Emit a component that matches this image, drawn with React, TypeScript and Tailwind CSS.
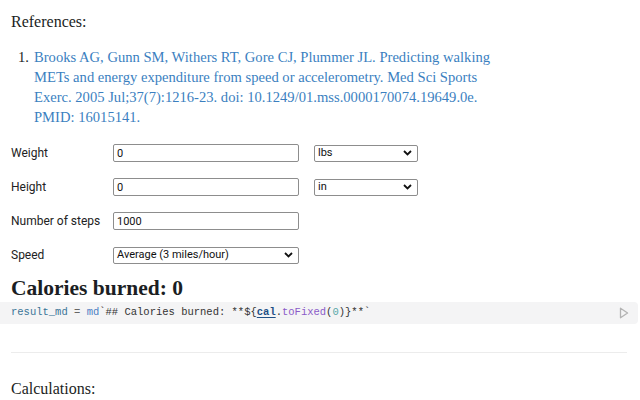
import React from "react";

const serif = "font-['Source_Serif_Pro','Liberation_Serif',serif]";
const sans = "font-['Roboto','Liberation_Sans',sans-serif]";

function Chevron() {
  return (
    <svg width="9" height="6" viewBox="0 0 9 6" className="shrink-0">
      <path d="M1 1l3.5 3.5L8 1" fill="none" stroke="#111" strokeWidth="1.8" />
    </svg>
  );
}

function Select({ value, width }: { value: string; width: string }) {
  return (
    <div
      className={`flex h-[17px] items-center justify-between rounded-[2px] border border-[#8d8d8d] bg-white pl-[3px] pr-[5px] text-[11px] text-[#111] ${width} ${sans}`}
    >
      <span>{value}</span>
      <Chevron />
    </div>
  );
}

function Field({ value }: { value: string }) {
  return (
    <input
      readOnly
      value={value}
      className={`h-[18px] w-[186px] rounded-[2px] border border-[#8d8d8d] bg-white px-[3px] text-[11px] text-[#111] outline-none ${sans}`}
    />
  );
}

function Row({ label, children }: { label: string; children: React.ReactNode }) {
  return (
    <div className="flex h-[18px] items-center">
      <div className={`w-[102px] text-[12px] text-[#222] ${sans}`}>{label}</div>
      <div className="flex items-center gap-[15px]">{children}</div>
    </div>
  );
}

export default function App() {
  return (
    <div className="h-[400px] w-[640px] overflow-hidden bg-white text-[#1b1e23]">
      {/* references */}
      <p className={`pl-[11px] pt-[12px] text-[16px] leading-[20px] ${serif}`}>References:</p>
      <ol className={`mt-[15px] pl-[18px] text-[14.6px] leading-[20px] ${serif}`}>
        <li className="flex">
          <span className="w-[16px] text-[#1b1e23]">1.</span>
          <span className="text-[#3b7fbf]">
            Brooks AG, Gunn SM, Withers RT, Gore CJ, Plummer JL. Predicting walking
            <br />
            METs and energy expenditure from speed or accelerometry. Med Sci Sports
            <br />
            Exerc. 2005 Jul;37(7):1216-23. doi: 10.1249/01.mss.0000170074.19649.0e.
            <br />
            PMID: 16015141.
          </span>
        </li>
      </ol>

      {/* inputs */}
      <div className="mt-[17px] flex flex-col gap-[16px] pl-[11px]">
        <Row label="Weight">
          <Field value="0" />
          <Select value="lbs" width="w-[104px]" />
        </Row>
        <Row label="Height">
          <Field value="0" />
          <Select value="in" width="w-[104px]" />
        </Row>
        <Row label="Number of steps">
          <Field value="1000" />
        </Row>
        <Row label="Speed">
          <Select value="Average (3 miles/hour)" width="w-[186px]" />
        </Row>
      </div>

      {/* result */}
      <h2 className={`mt-[10px] pl-[11px] text-[21.5px] font-bold leading-[28px] ${serif}`}>
        Calories burned: 0
      </h2>
      <div className="mr-[2px] flex h-[22px] items-center justify-between rounded-r-[4px] bg-[#f4f4f5] pl-[11px] pr-[9px]">
        <code className="whitespace-pre font-['Liberation_Mono',monospace] text-[10.5px] text-[#333]">
          <span className="text-[#3a7498]">result_md</span>
          <span className="text-[#666]"> = </span>
          <span className="text-[#4d7fc4]">md</span>
          <span>`## Calories burned: **</span>
          <span>{"${"}</span>
          <span className="font-bold text-[#1f4f86] underline decoration-[#1f4f86] underline-offset-2">cal</span>
          <span>.</span>
          <span className="text-[#8b5cc8]">toFixed</span>
          <span>(</span>
          <span className="text-[#56a7a8]">0</span>
          <span>)</span>
          <span>{"}**`"}</span>
        </code>
        <svg width="10" height="12" viewBox="0 0 10 12">
          <path d="M1.5 1.2v9.6L8.6 6z" fill="none" stroke="#b3b3b3" strokeWidth="1.3" strokeLinejoin="round" />
        </svg>
      </div>

      <div className="ml-[11px] mr-[13px] mt-[28px] h-px bg-[#ececec]" />

      <p className={`mt-[26px] pl-[11px] text-[16px] leading-[20px] ${serif}`}>Calculations:</p>
    </div>
  );
}
